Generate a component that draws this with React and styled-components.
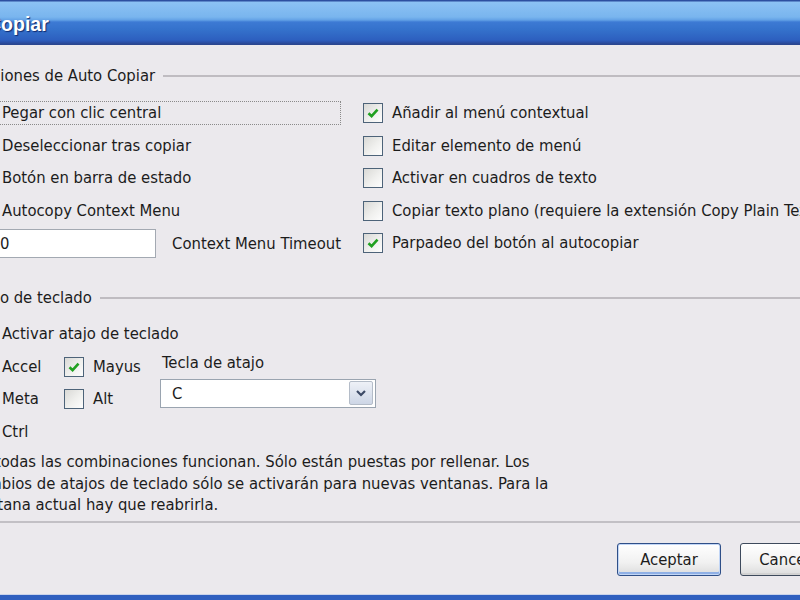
import React from 'react';
import styled, { createGlobalStyle } from 'styled-components';

const Global = createGlobalStyle`
  html, body {
    margin: 0;
    padding: 0;
    width: 800px;
    height: 600px;
    overflow: hidden;
    background: #ebe9ed;
  }
  body {
    font-family: "DejaVu Sans Condensed", "DejaVu Sans", sans-serif;
    font-size: 16.5px;
    color: #1c1c1c;
  }
`;

const Window = styled.div`
  margin-left: -45px;
  width: 900px;
  height: 600px;
  display: flex;
  flex-direction: column;
  background: #ebe9ed;
`;

const TitleBar = styled.div`
  height: 45px;
  flex: none;
  display: flex;
  align-items: center;
  padding-left: 32px;
  padding-top: 3px;
  box-sizing: border-box;
  background: linear-gradient(to bottom,
    #2d4fa0 0, #2d4fa0 1px, #8cc2f4 2px, #79b5ee 17px, #63a2e6 20px,
    #3d7ad4 22px, #3471cb 30px, #2d5fbf 40px, #2b52ab 42px, #2a4690 44px, #2a4690 45px);
  color: #fff;
  font-family: "Liberation Sans", Arial, sans-serif;
  font-weight: bold;
  font-size: 19.5px;
  text-shadow: 1px 1px 1px #0f2a6e;
`;

const Body = styled.div`
  flex: 1;
  display: flex;
  flex-direction: column;
  padding-top: 18px;
`;

const Group = styled.section`
  margin: 0 8px;
  & + & {
    margin-top: 25.5px;
  }
`;

const GroupHeader = styled.div`
  display: flex;
  align-items: center;
  height: 24px;
  &::after {
    content: '';
    flex: 1;
    height: 2px;
    background: #bfbcc1;
    margin-top: 1px;
  }
`;

const GroupLabel = styled.span`
  padding: 0 8px;
`;

const TwoCols = styled.div`
  display: grid;
  grid-template-columns: 368px 1fr;
  column-gap: 22px;
  padding: 10px 0 0 10px;
`;

const Col = styled.div`
  display: flex;
  flex-direction: column;
`;

const Row = styled.div`
  display: flex;
  align-items: center;
  height: 32.5px;
  gap: ${(p) => p.$gap || 6}px;
  white-space: nowrap;
`;

const Box = styled.span`
  flex: none;
  width: 20px;
  height: 20px;
  box-sizing: border-box;
  border: 1px solid #4d6379;
  background: linear-gradient(135deg, #d9d9d6 0%, #f0f0ee 55%, #fdfdfd 100%);
  display: flex;
  align-items: center;
  justify-content: center;
`;

const Label = styled.span`
  padding: 1px 2px;
  line-height: 20px;
  border: 1px dotted ${(p) => (p.$focus ? '#8a8a8a' : 'transparent')};
  flex: ${(p) => (p.$focus ? 1 : 'none')};
`;

const Check = ({ checked, focus, children }) => (
  <Row>
    <Box>
      {checked && (
        <svg width="14" height="14" viewBox="0 0 14 14">
          <path d="M2.5 7.2 L5.6 10.2 L11.5 3.6" fill="none" stroke="#21a121" strokeWidth="2.6" />
        </svg>
      )}
    </Box>
    <Label $focus={focus}>{children}</Label>
  </Row>
);

const TextInput = styled.div`
  width: 185px;
  height: 29px;
  box-sizing: border-box;
  border: 1px solid #a3a9b2;
  background: #fff;
  padding-left: 7px;
  display: flex;
  align-items: center;
`;

const Shortcuts = styled.div`
  padding: 9px 0 0 10px;
`;

const ShortcutGrid = styled.div`
  display: grid;
  grid-template-columns: 91px 96px 1fr;
  grid-template-rows: repeat(3, 32.5px);
`;

const KeyPicker = styled.div`
  grid-column: 3;
  grid-row: 1 / 3;
  display: flex;
  flex-direction: column;
  gap: 4px;
`;

const PickerLabel = styled.div`
  line-height: 24px;
  padding-left: 2px;
`;

const Select = styled.div`
  width: 216px;
  height: 29px;
  box-sizing: border-box;
  border: 1px solid #9aa4b0;
  background: #fff;
  display: flex;
  align-items: center;
  justify-content: space-between;
  padding: 0 2px 0 11px;
`;

const DropButton = styled.span`
  width: 24px;
  height: 24px;
  box-sizing: border-box;
  border: 1px solid #b4bcc8;
  border-radius: 2px;
  background: linear-gradient(to bottom, #eef1f7, #cdd6e6);
  display: flex;
  align-items: center;
  justify-content: center;
`;

const Note = styled.p`
  margin: 3px 0 0 7px;
  line-height: 21.5px;
`;

const Footer = styled.div`
  margin-top: auto;
  border-top: 2px solid #c2c0c5;
  display: flex;
  justify-content: flex-end;
  gap: 19px;
  padding: 20px 11px 19px 0;
  border-bottom: 5px solid #2f5fbf;
  box-shadow: inset 0 -1px 0 #c9d3ea;
`;

const Button = styled.button`
  width: 104px;
  height: 33px;
  font: inherit;
  color: #1c1c1c;
  border-radius: 3px;
  border: 1px solid ${(p) => (p.$default ? '#2f4f88' : '#3e4a5c')};
  background: linear-gradient(to bottom, #ffffff 0%, #f1f1f1 60%, #dcdcdc 100%);
  box-shadow: ${(p) =>
    p.$default
      ? 'inset 0 0 0 1px #c2d6f6, inset 0 -2px 0 1px #8fb0e6'
      : 'inset 0 -2px 0 0 #d2d2d2'};
  padding: 0;
`;

export default function App() {
  return (
    <>
      <Global />
      <Window>
        <TitleBar>Copiar</TitleBar>
        <Body>
          <Group>
            <GroupHeader>
              <GroupLabel>Opciones de Auto Copiar</GroupLabel>
            </GroupHeader>
            <TwoCols>
              <Col>
                <Check focus>Pegar con clic central</Check>
                <Check>Deseleccionar tras copiar</Check>
                <Check>Botón en barra de estado</Check>
                <Check>Autocopy Context Menu</Check>
                <Row $gap={16}>
                  <TextInput>500</TextInput>
                  <span>Context Menu Timeout</span>
                </Row>
              </Col>
              <Col>
                <Check checked>Añadir al menú contextual</Check>
                <Check>Editar elemento de menú</Check>
                <Check>Activar en cuadros de texto</Check>
                <Check>Copiar texto plano (requiere la extensión Copy Plain Text)</Check>
                <Check checked>Parpadeo del botón al autocopiar</Check>
              </Col>
            </TwoCols>
          </Group>
          <Group>
            <GroupHeader>
              <GroupLabel>Atajo de teclado</GroupLabel>
            </GroupHeader>
            <Shortcuts>
              <Check>Activar atajo de teclado</Check>
              <ShortcutGrid>
                <Check>Accel</Check>
                <Check checked>Mayus</Check>
                <KeyPicker>
                  <PickerLabel>Tecla de atajo</PickerLabel>
                  <Select>
                    C
                    <DropButton>
                      <svg width="12" height="10" viewBox="0 0 12 10">
                        <path d="M2 3 L6 7 L10 3" fill="none" stroke="#3c4a66" strokeWidth="2.2" />
                      </svg>
                    </DropButton>
                  </Select>
                </KeyPicker>
                <Check>Meta</Check>
                <Check>Alt</Check>
                <Check>Ctrl</Check>
              </ShortcutGrid>
            </Shortcuts>
            <Note>
              No todas las combinaciones funcionan. Sólo están puestas por rellenar. Los
              <br />
              cambios de atajos de teclado sólo se activarán para nuevas ventanas. Para la
              <br />
              ventana actual hay que reabrirla.
            </Note>
          </Group>
          <Footer>
            <Button $default>Aceptar</Button>
            <Button>Cancelar</Button>
          </Footer>
        </Body>
      </Window>
    </>
  );
}
